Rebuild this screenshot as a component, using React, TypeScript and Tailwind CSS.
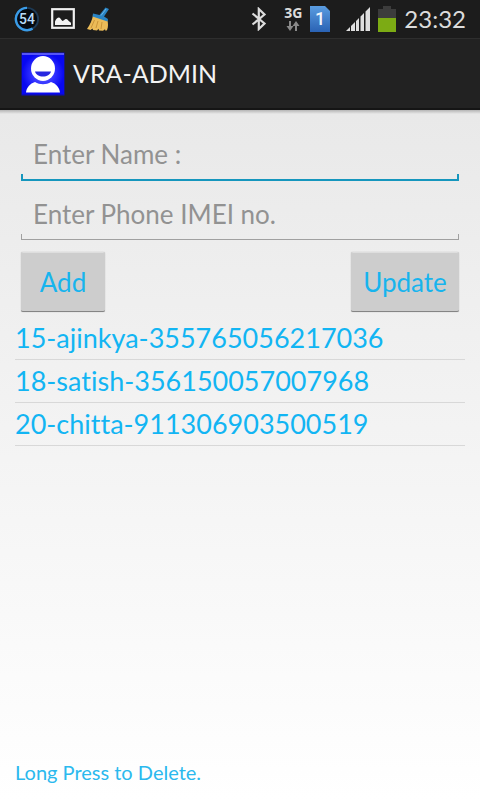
import { useState } from 'react';
import type { FormEvent } from 'react';

interface Phone {
  id: number;
  name: string;
  imei: string;
}

const initialPhones: Phone[] = [
  { id: 15, name: 'ajinkya', imei: '355765056217036' },
  { id: 18, name: 'satish', imei: '356150057007968' },
  { id: 20, name: 'chitta', imei: '911306903500519' },
];

function StatusBar() {
  return (
    <div className="flex h-[38px] items-center justify-between bg-[#1c1c1c] px-[14px] text-[#dcdcdc]">
      <div className="flex items-center gap-[11px]">
        {/* Memory usage ring */}
        <svg className="h-[26px] w-[26px]" viewBox="0 0 28 28">
          <circle cx="14" cy="14" r="12" fill="#050a10" stroke="#1d3a55" strokeWidth="2" />
          <path d="M14 2a12 12 0 1 0 6 22.400" fill="none" stroke="#3a9be6" strokeWidth="2.600" />
          <text x="14" y="19" textAnchor="middle" fontSize="15" fontWeight="500" fontFamily="Roboto, sans-serif" fill="#b9dcf8">54</text>
        </svg>
        {/* Gallery */}
        <svg className="h-6 w-6" viewBox="0 0 24 24">
          <rect x="1.200" y="2.200" width="21.600" height="18.600" fill="#1c1c1c" stroke="#f0f0f0" strokeWidth="2.200" />
          <path d="M4 18v-3.500c1-2.500 2.500-4 4-4s2 2.500 3.500 3.500c1.500-.2 2-2 3.500-2s2 1.500 3 2.300 2 1.200 2 2V18z" fill="#f4f4f4" />
        </svg>
        {/* Broom */}
        <svg className="h-6 w-6" viewBox="0 0 24 24">
          <path d="M7 8.500C6 13 4 18 1 22l3.500 1 2-1.500.5 1.500 4 .4 1.500-1.600.5 1.700 4 .3 2-1.500.5 1.400 1.500-.4c1.500-4 1-7 .5-10z" fill="#ecbc58" />
          <path d="M8.500 13L5 21M12 14l-2 7M16 15l-1 7" stroke="#c18a30" strokeWidth="0.800" />
          <path d="M7 6.500l6.500 1.500 6-7.500 3.500 1.500-5 7.500 4 2.500-.5 2.500L6.500 9.500z" fill="#2a84c4" />
          <path d="M15 8.500l5-6.500" stroke="#6cb8e8" strokeWidth="1" />
        </svg>
      </div>

      <div className="flex items-center">
        {/* Bluetooth */}
        <svg className="mr-4 h-6 w-[18px]" viewBox="0 0 18 24" fill="none" stroke="currentColor" strokeWidth="2.200">
          <path d="M2.500 6.500l12 10L8.800 22V2l5.700 5.500-12 10" />
        </svg>
        {/* Mobile data */}
        <div className="mr-2 flex flex-col items-center">
          <span className="font-['Open_Sans',sans-serif] text-[14px] leading-[14px] font-bold">3G</span>
          <svg className="h-3 w-[14px]" viewBox="0 0 14 12" fill="#8a8a8a">
            <path d="M3 1h2v5h2.500L4 11 .5 6H3zM9 11h2V6h2.500L10 1 6.500 6H9z" />
          </svg>
        </div>
        {/* SIM slot */}
        <svg className="mr-4 h-[26px] w-5" viewBox="0 0 20 26">
          <defs>
            <linearGradient id="sim" x1="0" y1="0" x2="0" y2="1">
              <stop offset="0" stopColor="#5a9ce0" />
              <stop offset="1" stopColor="#2a62b4" />
            </linearGradient>
          </defs>
          <path d="M0 0h15l5 5v21H0z" fill="url(#sim)" />
          <text x="10" y="19" textAnchor="middle" fontSize="18" fontFamily="Roboto, sans-serif" fontWeight="500" fill="#f2f6fb">1</text>
        </svg>
        {/* Signal */}
        <svg className="mr-2 h-6 w-6" viewBox="0 0 24 24" fill="#dedede">
          <path d="M0 24l4-4v4zM5 24v-5l4-4v9zM10 24V14l3-3v13zM14.500 24V9.500l3.500-3.500v18zM19.500 24V4.500L24 0v24z" />
        </svg>
        {/* Battery */}
        <svg className="mr-2 h-[26px] w-[18px]" viewBox="0 0 18 26">
          <path d="M0 3h5V0h8v3h5v23H0z" fill="#3c3c3c" />
          <path d="M0 12h18v14H0z" fill="#7cab14" />
        </svg>
        <time className="text-[24px] leading-8">23:32</time>
      </div>
    </div>
  );
}

function AppIcon() {
  return (
    <svg className="h-11 w-11" viewBox="0 0 44 44">
      <defs>
        <radialGradient id="tile">
          <stop offset="0" stopColor="#6a6aff" />
          <stop offset="0.600" stopColor="#2c2cff" />
          <stop offset="1" stopColor="#0808f0" />
        </radialGradient>
      </defs>
      <rect x="0.500" y="0.500" width="43" height="43" fill="#0c0cc0" />
      <rect x="1" y="1" width="42" height="41" fill="url(#tile)" />
      <path d="M1 2h42" stroke="#a0a0ff" strokeWidth="1.200" />
      <path d="M5 40.500c.5-5 4-9 9-10.500 5 3 11 3 16 0 5 1.500 8.500 5.500 9 10.500z" fill="#fff" />
      <ellipse cx="22" cy="16.500" rx="12" ry="12.500" fill="#fff" />
      <path d="M14 19.500h16c-1 3.500-4 5-8 5s-7-1.500-8-5z" fill="#2626e0" />
    </svg>
  );
}

interface FieldProps {
  hint: string;
  value: string;
  active: boolean;
  onFocus: () => void;
  onChange: (value: string) => void;
}

function Field({ hint, value, active, onFocus, onChange }: FieldProps) {
  return (
    <div>
      <input
        type="text"
        aria-label={hint}
        placeholder={hint}
        value={value}
        onFocus={onFocus}
        onChange={(e) => onChange(e.target.value)}
        className="block h-10 w-full bg-transparent px-3 text-[26px] text-[#333] outline-none placeholder:text-[#929292]"
      />
      <div className={active ? 'h-[7px] border-x-2 border-b-2 border-[#1596bd]' : 'h-[6px] border-x border-b border-[#a0a0a0]'} />
    </div>
  );
}

const buttonClass =
  'h-[60px] rounded-[2px] border-t border-b border-t-[#dedede] border-b-[#858585] bg-[#cdcdcd] text-[26px] text-[#17b4ee] shadow-[0_0_1px_#999] active:bg-[#bdbdbd]';

export default function App() {
  const [phones, setPhones] = useState<Phone[]>(initialPhones);
  const [name, setName] = useState('');
  const [imei, setImei] = useState('');
  const [selected, setSelected] = useState<number | null>(null);
  const [activeField, setActiveField] = useState('name');

  const clearForm = () => {
    setName('');
    setImei('');
    setSelected(null);
  };

  const handleAdd = (e: FormEvent) => {
    e.preventDefault();
    if (!name || !imei) return;
    const nextId = Math.max(0, ...phones.map((p) => p.id)) + 1;
    setPhones([...phones, { id: nextId, name, imei }]);
    clearForm();
  };

  const handleUpdate = () => {
    if (selected === null) return;
    setPhones(phones.map((p) => (p.id === selected ? { ...p, name, imei } : p)));
    clearForm();
  };

  const handleSelect = (phone: Phone) => {
    setSelected(phone.id);
    setName(phone.name);
    setImei(phone.imei);
  };

  // Long press fires the context menu event on touch screens
  const handleDelete = (id: number) => {
    setPhones(phones.filter((p) => p.id !== id));
  };

  return (
    <div className="flex min-h-screen flex-col bg-white font-[Lato,sans-serif] [font-variant-ligatures:none]">
      <StatusBar />

      <header className="flex h-[72px] items-center gap-2 border-t border-b-2 border-t-[#2e2e2e] border-b-[#151515] bg-[#222] px-[21px]">
        <AppIcon />
        <h1 className="text-[25px] text-[#f3f3f3]">VRA-ADMIN</h1>
      </header>

      <div className="h-1 bg-linear-to-b from-[#b5b5b5] to-[#e9e9e9]" />

      <main className="flex flex-1 flex-col bg-linear-to-b from-[#e9e9e9] to-white px-[15px] pt-5 pb-4">
        <form onSubmit={handleAdd} className="px-1.5">
          <div className="flex flex-col gap-[13px]">
            <Field hint="Enter Name :" value={name} active={activeField === 'name'} onFocus={() => setActiveField('name')} onChange={setName} />
            <Field hint="Enter Phone IMEI no." value={imei} active={activeField === 'imei'} onFocus={() => setActiveField('imei')} onChange={setImei} />
          </div>
          <div className="mt-3 flex justify-between">
            <button type="submit" className={`${buttonClass} w-21`}>Add</button>
            <button type="button" onClick={handleUpdate} className={`${buttonClass} w-27`}>Update</button>
          </div>
        </form>

        <ul className="mt-[5px]">
          {phones.map((phone) => (
            <li key={phone.id} className="border-b border-[#d8d8d8]">
              <button
                type="button"
                onClick={() => handleSelect(phone)}
                onContextMenu={(e) => {
                  e.preventDefault();
                  handleDelete(phone.id);
                }}
                className="block h-[42px] w-full text-left text-[27px] text-[#12b5f3]"
              >
                {phone.id}-{phone.name}-{phone.imei}
              </button>
            </li>
          ))}
        </ul>

        <p className="mt-auto text-[20px] leading-6 text-[#2bb9ee]">Long Press to Delete.</p>
      </main>
    </div>
  );
}
